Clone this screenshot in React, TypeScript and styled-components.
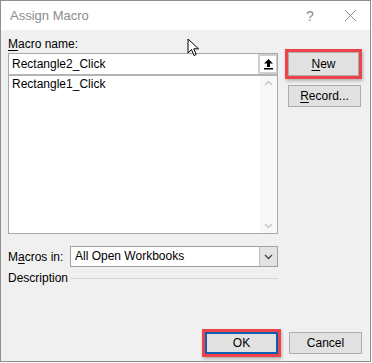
import React from 'react';
import styled, {createGlobalStyle} from 'styled-components';

const GlobalStyle = createGlobalStyle`
    html, body {
        margin: 0;
        padding: 0;
        background: #ffffff;
    }
    body {
        font-family: "Segoe UI", "Liberation Sans", Arial, sans-serif;
        font-size: 12px;
        color: #000;
    }
`;

const Dialog = styled.div`
    position: relative;
    box-sizing: border-box;
    width: 371px;
    height: 362px;
    border: 1px solid #8f8f8f;
    background: #f0f0f0;
    display: flex;
    flex-direction: column;
`;

const TitleBar = styled.div`
    height: 29px;
    background: #ffffff;
    display: flex;
    align-items: center;
    padding-left: 9px;
`;

const Title = styled.div`
    flex: 1;
    font-size: 13px;
    color: #8c8c8c;
`;

const TitleButton = styled.div`
    width: 40px;
    height: 29px;
    display: flex;
    align-items: center;
    justify-content: center;
    color: #8c8c8c;
    font-size: 14px;
`;

const Body = styled.div`
    flex: 1;
    display: flex;
    flex-direction: column;
    padding: 7px 8px 4px 7px;
`;

const Top = styled.div`
    display: flex;
    gap: 7px;
`;

const LeftCol = styled.div`
    width: 273px;
    display: flex;
    flex-direction: column;
`;

const RightCol = styled.div`
    display: flex;
    flex-direction: column;
    align-items: flex-start;
    padding-top: 12px;
`;

const Label = styled.div`
    height: 16px;
    line-height: 14px;
`;

const U = styled.span`
    text-decoration: underline;
    text-underline-offset: 2px;
`;

const NameRow = styled.div`
    display: flex;
    height: 21px;
    box-sizing: border-box;
    border: 1px solid #a8a8a8;
    border-bottom: none;
    background: #fff;
`;

const NameInput = styled.div`
    flex: 1;
    padding-left: 3px;
    line-height: 20px;
`;

const UpButton = styled.div`
    width: 19px;
    box-sizing: border-box;
    border: 2px solid #cfcfcf;
    border-right-width: 1px;
    display: flex;
    align-items: center;
    justify-content: center;
    background: #fff;
`;

const List = styled.div`
    display: flex;
    height: 160px;
    box-sizing: border-box;
    border: 1px solid #a8a8a8;
    border-top: 2px solid #b4b4b4;
    background: #fff;
`;

const ListItems = styled.div`
    flex: 1;
    padding: 1px 3px;
    line-height: 15px;
`;

const ScrollBar = styled.div`
    width: 17px;
    background: #f8f8f8;
    display: flex;
    flex-direction: column;
    justify-content: space-between;
    align-items: center;
    padding: 4px 0;
`;

const FieldRow = styled.div<{top: number}>`
    display: flex;
    align-items: center;
    margin-top: ${p => p.top}px;
`;

const RowLabel = styled.div`
    width: 62px;
`;

const Select = styled.div`
    flex: 1;
    height: 21px;
    box-sizing: border-box;
    border: 1px solid #a0a0a0;
    background: #fff;
    display: flex;
`;

const SelectText = styled.div`
    flex: 1;
    padding-left: 4px;
    line-height: 19px;
`;

const SelectButton = styled.div`
    width: 17px;
    background: #e3e3e3;
    border-left: 1px solid #bdbdbd;
    display: flex;
    align-items: center;
    justify-content: center;
`;

const Rule = styled.div`
    flex: 1;
    height: 1px;
    background: #d7d7d7;
    margin-left: 2px;
    margin-top: 1px;
`;

const Highlight = styled.div`
    border: 3px solid #ef434a;
    box-shadow: 1px 2px 3px rgba(0, 0, 0, 0.25);
    display: flex;
`;

const Button = styled.div<{primary?: boolean; wide?: number}>`
    box-sizing: border-box;
    width: ${p => p.wide ?? 73}px;
    height: ${p => (p.primary ? 22 : 22)}px;
    background: #e1e1e1;
    border: ${p => (p.primary ? '2px solid #0d5fb4' : '1px solid #adadad')};
    display: flex;
    align-items: center;
    justify-content: center;
`;

const Spacer = styled.div`
    flex: 1;
`;

const Bottom = styled.div`
    display: flex;
    justify-content: flex-end;
    align-items: center;
    gap: 8px;
`;

const Cursor = styled.svg`
    position: absolute;
    left: 186px;
    top: 37px;
`;

const UpArrow = () => (
    <svg width="11" height="12" viewBox="0 0 11 12">
        <path d="M5.5 1 L10 5.5 L7 5.5 L7 9 L4 9 L4 5.5 L1 5.5 Z" fill="#000"/>
        <rect x="1" y="10" width="9" height="1.5" fill="#000"/>
    </svg>
);

const Chevron = ({up, color}: {up?: boolean; color: string}) => (
    <svg width="9" height="6" viewBox="0 0 9 6">
        <path d={up ? "M1 5 L4.5 1.5 L8 5" : "M1 1 L4.5 4.5 L8 1"} fill="none" stroke={color} strokeWidth="1.3"/>
    </svg>
);

const App: React.FC = () => {
    return (
        <>
            <GlobalStyle/>
            <Dialog>
                <TitleBar>
                    <Title>Assign Macro</Title>
                    <TitleButton>?</TitleButton>
                    <TitleButton>
                        <svg width="13" height="13" viewBox="0 0 13 13">
                            <path d="M1 1 L12 12 M12 1 L1 12" stroke="#8a8a8a" strokeWidth="1"/>
                        </svg>
                    </TitleButton>
                </TitleBar>
                <Body>
                    <Top>
                        <LeftCol>
                            <Label><U>M</U>acro name:</Label>
                            <NameRow>
                                <NameInput>Rectangle2_Click</NameInput>
                                <UpButton><UpArrow/></UpButton>
                            </NameRow>
                            <List>
                                <ListItems>Rectangle1_Click</ListItems>
                                <ScrollBar>
                                    <Chevron up color="#c4c4c4"/>
                                    <Chevron color="#c4c4c4"/>
                                </ScrollBar>
                            </List>
                            <FieldRow top={12}>
                                <RowLabel>M<U>a</U>cros in:</RowLabel>
                                <Select>
                                    <SelectText>All Open Workbooks</SelectText>
                                    <SelectButton><Chevron color="#444"/></SelectButton>
                                </Select>
                            </FieldRow>
                            <FieldRow top={4}>
                                <span>Description</span>
                                <Rule/>
                            </FieldRow>
                        </LeftCol>
                        <RightCol>
                            <Highlight>
                                <Button wide={71} style={{height: 24}}><span><U>N</U>ew</span></Button>
                            </Highlight>
                            <div style={{marginTop: 6, marginLeft: 3}}>
                                <Button><span><U>R</U>ecord...</span></Button>
                            </div>
                        </RightCol>
                    </Top>
                    <Spacer/>
                    <Bottom>
                        <Highlight>
                            <Button primary>OK</Button>
                        </Highlight>
                        <Button>Cancel</Button>
                    </Bottom>
                </Body>
                <Cursor width="14" height="20" viewBox="0 0 14 20">
                    <path d="M1 1 L1 15 L4.5 11.5 L7 17.5 L9.2 16.5 L6.8 10.8 L11.5 10.8 Z" fill="#fff" stroke="#000" strokeWidth="1"/>
                </Cursor>
            </Dialog>
        </>
    );
}

export default App;
